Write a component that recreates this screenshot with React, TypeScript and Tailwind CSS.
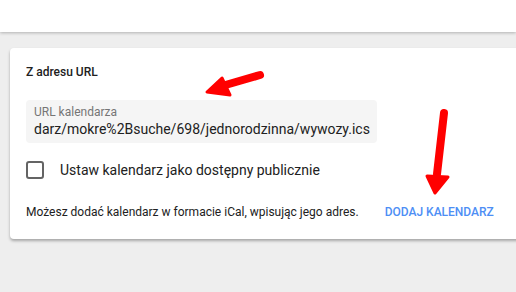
export default function App() {
  return (
    <div className="relative h-[292px] w-[516px] overflow-hidden bg-[#eeeeee] font-['Roboto',sans-serif] text-[#212121]">
      <div className="relative z-10 h-8 bg-white shadow-[0_1px_3px_rgba(0,0,0,0.25)]" />
      <div className="ml-[10px] mt-4 w-[520px] rounded-sm bg-white pl-4 pt-4 pb-[19px] shadow-[0_2px_3px_rgba(0,0,0,0.3)]">
        <div className="text-[12px] leading-4 font-medium">Z adresu URL</div>
        <div className="mt-5 flex h-[43px] w-[351px] flex-col justify-center overflow-hidden rounded bg-[#f5f5f5] px-2">
          <div className="text-[12px] leading-[14px] text-[#757575]">URL kalendarza</div>
          <div className="whitespace-nowrap text-[14px] leading-5 text-[#212121]">
            darz/mokre%2Bsuche/698/jednorodzinna/wywozy.ics
          </div>
        </div>
        <label className="mt-[17px] flex items-center">
          <span className="h-[18px] w-[18px] rounded-[3px] border-2 border-[#646464]" />
          <span className="ml-4 text-[14px] leading-5">Ustaw kalendarz jako dostępny publicznie</span>
        </label>
        <div className="mt-6 flex items-center">
          <span className="text-[12px] leading-4">Możesz dodać kalendarz w formacie iCal, wpisując jego adres.</span>
          <button className="ml-[26px] text-[12px] font-medium leading-4 text-[#4d8ef5]">DODAJ KALENDARZ</button>
        </div>
      </div>
      <svg className="pointer-events-none absolute left-0 top-0" width="516" height="292">
        <g fill="#ff0000" stroke="#ff0000" strokeLinecap="round" strokeLinejoin="round">
          <line x1="260" y1="75" x2="222" y2="86" strokeWidth="8" />
          <polygon points="222,78 207,92 230,95" strokeWidth="3" />
          <line x1="444" y1="113" x2="437" y2="174" strokeWidth="8" />
          <polygon points="427,176 448,177 435,193" strokeWidth="3" />
        </g>
      </svg>
    </div>
  );
}
